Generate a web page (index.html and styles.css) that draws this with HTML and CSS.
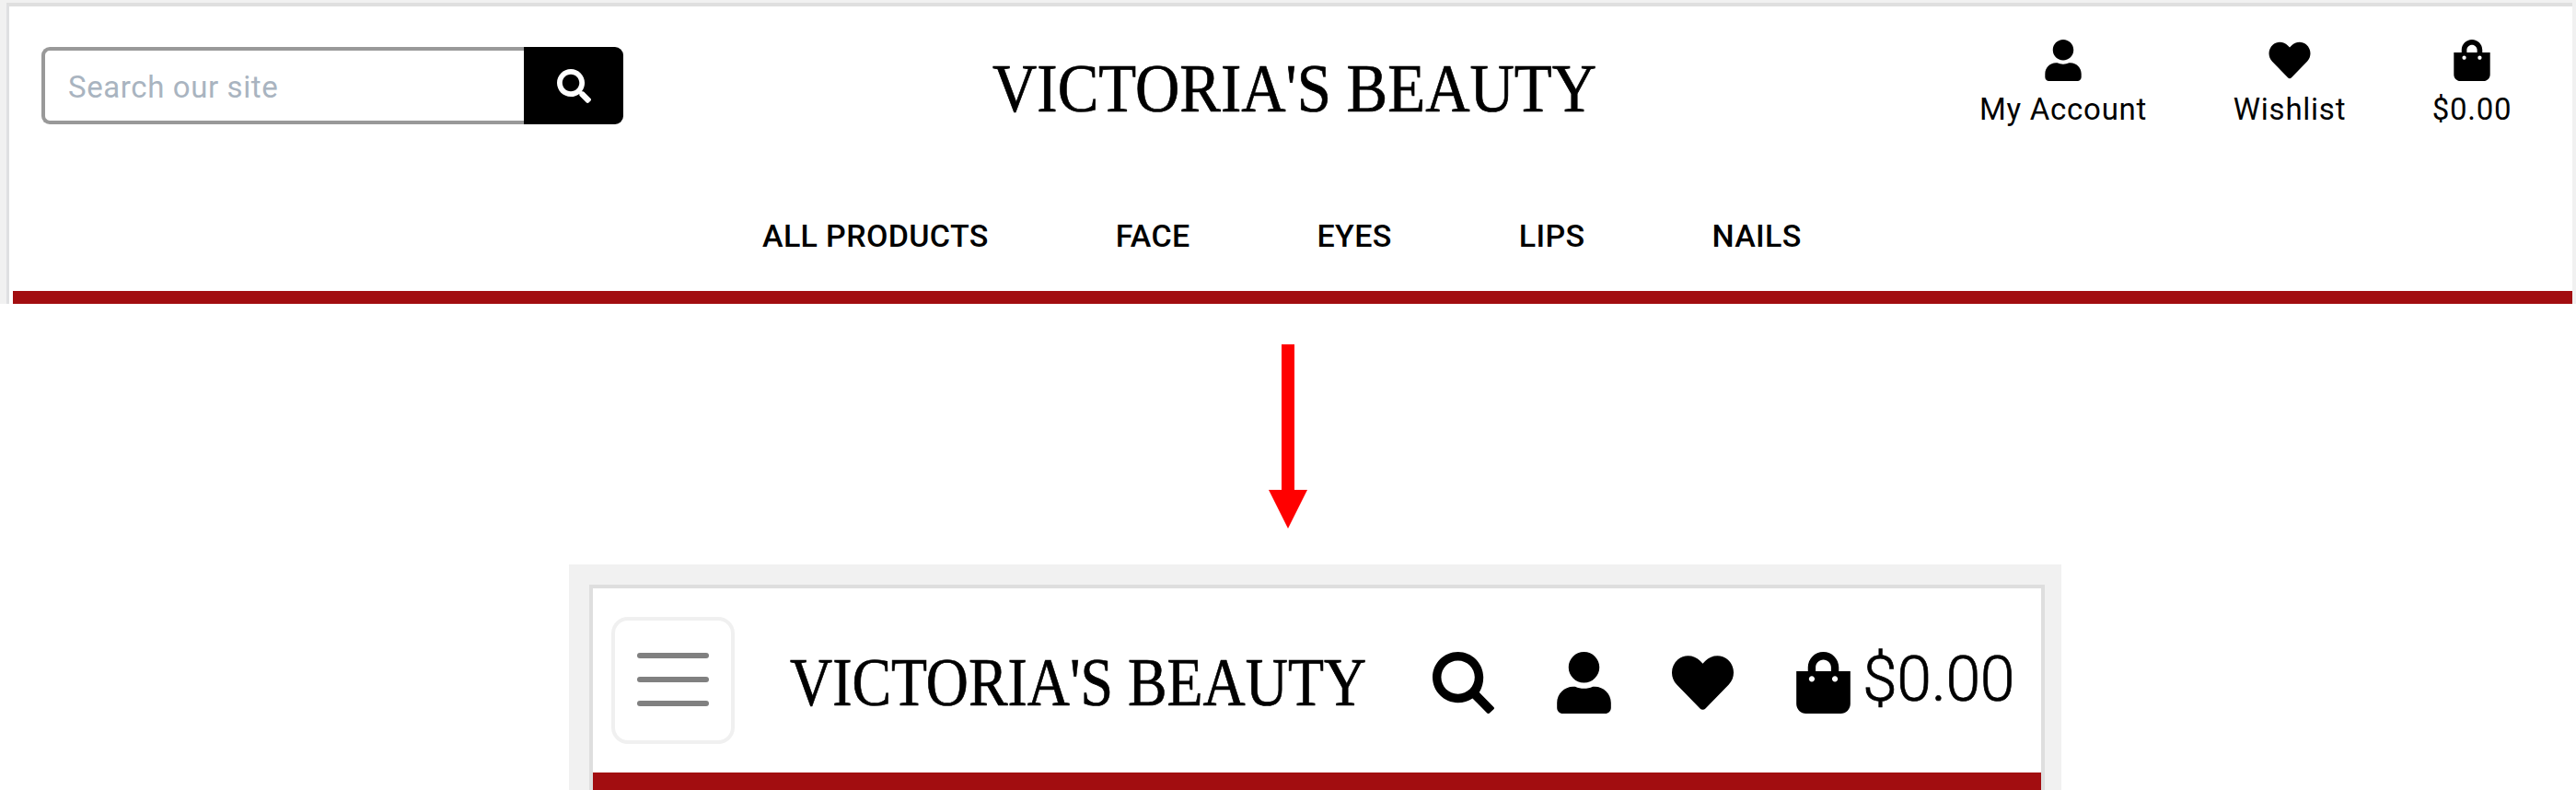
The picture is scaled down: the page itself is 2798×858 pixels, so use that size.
FILE: index.html
```html
<!DOCTYPE html>
<html lang="en">
<head>
<meta charset="utf-8">
<title>Victoria's Beauty</title>
<link rel="stylesheet" href="styles.css">
</head>
<body>
<svg class="sprite" aria-hidden="true">
<symbol id="search" viewBox="0 0 512 512"><path d="M505 442.7L405.3 343c-4.5-4.5-10.6-7-17-7H372c27.6-35.3 44-79.7 44-128C416 93.1 322.9 0 208 0S0 93.1 0 208s93.1 208 208 208c48.3 0 92.7-16.4 128-44v16.3c0 6.4 2.5 12.5 7 17l99.7 99.7c9.4 9.4 24.6 9.4 33.9 0l28.3-28.3c9.4-9.4 9.4-24.6.1-34zM208 336c-70.7 0-128-57.2-128-128 0-70.7 57.2-128 128-128 70.7 0 128 57.2 128 128 0 70.7-57.2 128-128 128z"/></symbol>
<symbol id="search-thin" viewBox="0 0 512 512"><path fill-rule="evenodd" d="M508 458L388 337C410 301 422 258 422 211 422 94 327 0 211 0S0 94 0 211s95 211 211 211c45 0 86-14 121-37l121 123c6 6 14 6 20 0l35-33c6-5 5-12 0-17zM211 350c-77 0-139-62-139-139S134 72 211 72s139 62 139 139-62 139-139 139z"/></symbol>
<symbol id="user" viewBox="0 0 448 512"><path d="M224 256c70.7 0 128-57.3 128-128S294.7 0 224 0 96 57.3 96 128s57.3 128 128 128zm89.6 32h-16.7c-22.2 10.2-46.9 16-72.9 16s-50.6-5.8-72.9-16h-16.7C60.2 288 0 348.2 0 422.4V464c0 26.5 21.5 48 48 48h352c26.5 0 48-21.5 48-48v-41.6c0-74.2-60.2-134.4-134.4-134.4z"/></symbol>
<symbol id="heart" viewBox="0 0 512 512"><path d="M462.3 62.6C407.5 15.9 326 24.3 275.7 76.2L256 96.5l-19.7-20.3C186.1 24.3 104.5 15.9 49.7 62.6c-62.8 53.6-66.1 149.8-9.9 207.9l193.5 199.8c12.5 12.9 32.8 12.9 45.3 0l193.5-199.8c56.3-58.1 53-154.3-9.8-207.9z"/></symbol>
<symbol id="bag" viewBox="0 0 448 512"><path d="M352 160v-32C352 57.42 294.579 0 224 0 153.42 0 96 57.42 96 128v32H0v272c0 44.183 35.817 80 80 80h288c44.183 0 80-35.817 80-80V160h-96zm-192-32c0-35.29 28.71-64 64-64s64 28.71 64 64v32H160v-32zm160 120c-13.255 0-24-10.745-24-24s10.745-24 24-24 24 10.745 24 24-10.745 24-24 24zm-192 0c-13.255 0-24-10.745-24-24s10.745-24 24-24 24 10.745 24 24-10.745 24-24 24z"/></symbol>
</svg>

<section class="desktop">
  <header class="desktop-page">
    <div class="top-row">
      <form class="search">
        <div class="search-field">Search our site</div>
        <div class="search-button"><svg class="search-icon"><use href="#search"/></svg></div>
      </form>
      <div class="logo logo-desktop">VICTORIA'S BEAUTY</div>
      <div class="actions">
        <a class="action account"><svg class="icon-narrow"><use href="#user"/></svg><span>My Account</span></a>
        <a class="action wishlist"><svg class="icon-wide"><use href="#heart"/></svg><span>Wishlist</span></a>
        <a class="action cart"><svg class="icon-narrow"><use href="#bag"/></svg><span>$0.00</span></a>
      </div>
    </div>
    <nav class="nav">
      <a>ALL PRODUCTS</a><a>FACE</a><a>EYES</a><a>LIPS</a><a>NAILS</a>
    </nav>
    <div class="banner"></div>
  </header>
</section>

<svg class="arrow" viewBox="0 0 42 200"><path d="M14 0h14v158h14L21 200 0 158h14z"/></svg>

<section class="mobile">
  <header class="mobile-page">
    <div class="mobile-bar">
      <div class="toggler"><i></i><i></i><i></i></div>
      <div class="logo logo-mobile">VICTORIA'S BEAUTY</div>
      <div class="mobile-icons">
        <svg class="m-search"><use href="#search-thin"/></svg>
        <svg class="m-user"><use href="#user"/></svg>
        <svg class="m-heart"><use href="#heart"/></svg>
        <svg class="m-bag"><use href="#bag"/></svg>
        <span class="total">$0.00</span>
      </div>
    </div>
    <div class="mobile-banner"></div>
  </header>
</section>
</body>
</html>
```
FILE: styles.css
```css
* { box-sizing: border-box; }
body {
  margin: 0;
  width: 2798px;
  height: 858px;
  overflow: hidden;
  background: #fff;
  color: #000;
  font-family: Roboto, "Liberation Sans", sans-serif;
}
.sprite { display: none; }
svg { display: block; flex: none; }

/* Wide layout */
.desktop {
  height: 330px;
  padding: 3px 4px 0 7px;
  background: #f1f1f1;
}
.desktop-page {
  height: 327px;
  border-top: 4px solid #dfdfdf;
  border-left: 3px solid #dfe0e2;
  background: #fff;
  display: flex;
  flex-direction: column;
}
.top-row {
  display: grid;
  grid-template-columns: 1068px 1073px 1fr;
  height: 206px;
}
.search { display: flex; margin: 44px 0 0 35px; height: 84px; width: 632px; }
.search-field {
  width: 524px;
  border: 4px solid #999;
  border-right: 0;
  border-radius: 9px 0 0 9px;
  padding: 1px 0 0 25px;
  font-size: 33px;
  letter-spacing: .6px;
  line-height: 78px;
  color: #a9b4c0;
}
.search-button {
  width: 108px;
  background: #000;
  border-radius: 0 9px 9px 0;
  display: flex;
  align-items: center;
  justify-content: center;
}
.search-icon { width: 37px; height: 37px; fill: #fff; }
.logo {
  font-family: "Liberation Serif", serif;
  font-size: 73px;
  line-height: 84px;
  white-space: nowrap;
  transform-origin: left center;
  -webkit-text-stroke: .7px #000;
}
.logo-desktop { margin-top: 48px; transform: scaleX(.917); }
.actions { display: flex; padding-top: 36px; }
.action {
  display: flex;
  flex-direction: column;
  align-items: center;
  flex: none;
  font-size: 33px;
  letter-spacing: .75px;
  line-height: 38px;
  white-space: nowrap;
}
.action svg { height: 45px; margin-bottom: 12px; }
.icon-narrow { width: 40px; }
.icon-wide { width: 46px; }
.account { width: 180px; }
.wishlist { width: 120px; margin-left: 96px; }
.cart { width: 84px; margin-left: 96px; }
.nav {
  display: flex;
  gap: 138px;
  height: 103px;
  padding: 23px 0 0 818px;
  font-size: 34px;
  font-weight: 500;
  letter-spacing: .35px;
  line-height: 40px;
  white-space: nowrap;
}
.banner { height: 14px; margin-left: 4px; background: #a20d10; }

.arrow { width: 42px; height: 200px; margin: 44px 0 39px 1378px; fill: #f00; }

/* Narrow layout */
.mobile {
  width: 1621px;
  height: 245px;
  margin-left: 618px;
  padding: 22px 18px 0 22px;
  background: #f1f1f1;
}
.mobile-page {
  height: 223px;
  border: 4px solid #dedede;
  border-bottom: 0;
  background: #fff;
}
.mobile-bar { display: flex; height: 200px; padding-left: 20px; }
.toggler {
  width: 134px;
  height: 138px;
  margin-top: 31px;
  padding-bottom: 3px;
  border: 4px solid #f0f0f0;
  border-radius: 18px;
  display: flex;
  flex: none;
  flex-direction: column;
  align-items: center;
  justify-content: center;
  gap: 20px;
}
.toggler i { width: 78px; height: 6px; border-radius: 3px; background: #808080; }
.logo-mobile { width: 698px; flex: none; margin: 61px 0 0 60px; transform: scaleX(.875); }
.mobile-icons { display: flex; margin-top: 69px; }
.mobile-icons svg { height: 67px; }
.m-search { width: 67px; }
.m-user, .m-bag { width: 59px; }
.m-user { margin-left: 68px; }
.m-heart { width: 67px; margin-left: 66px; }
.m-bag { margin-left: 68px; }
.total {
  margin: -10px 0 0 13px;
  font-size: 68px;
  font-weight: 300;
  line-height: 80px;
  letter-spacing: -.4px;
  -webkit-text-stroke: .7px #000;
}
.mobile-banner { height: 19px; background: #a20d10; }
```
